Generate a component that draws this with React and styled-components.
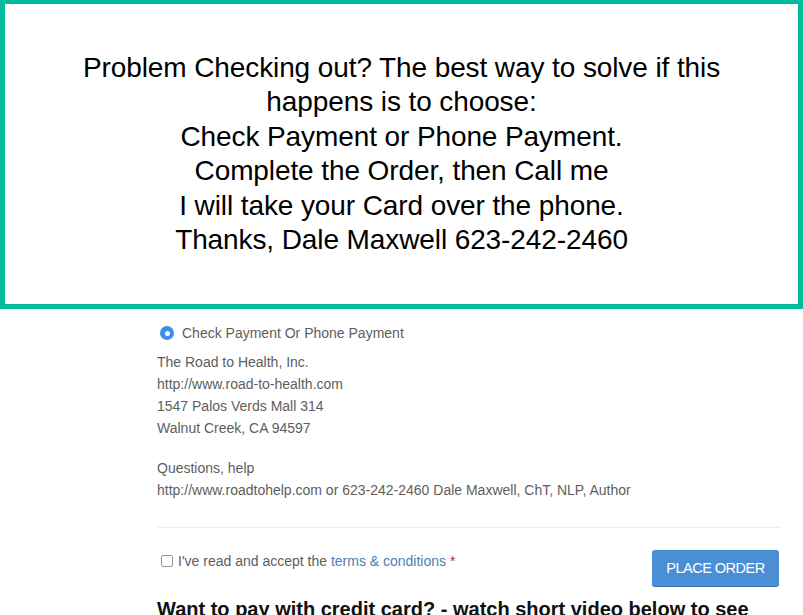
import React from 'react'
import styled, { createGlobalStyle } from 'styled-components'

const GlobalStyle = createGlobalStyle`
  body {
    margin: 0;
    background: #fff;
    font-family: "Liberation Sans", Arial, sans-serif;
  }
`

const Notice = styled.div`
  box-sizing: border-box;
  height: 309px;
  border: 5px solid #00bc9d;
  border-top-width: 4px;
  display: flex;
  align-items: center;
  justify-content: center;
`
const NoticeText = styled.p`
  margin: 0;
  text-align: center;
  font-size: 28px;
  line-height: 34.5px;
  color: #000;
  white-space: nowrap;
  letter-spacing: -0.1px;
`
const Content = styled.div`
  margin-left: 157px;
  width: 624px;
  padding-top: 13px;
  color: #5e5e5e;
  font-size: 14px;
`
const RadioRow = styled.label`
  display: flex;
  align-items: center;
  gap: 8px;
  height: 22px;
  margin-left: 3px;
  margin-bottom: 7px;
`
const Radio = styled.span`
  width: 14px;
  height: 14px;
  border-radius: 50%;
  background: #3d8ee8;
  display: flex;
  align-items: center;
  justify-content: center;
  &::after {
    content: '';
    width: 5px;
    height: 5px;
    border-radius: 50%;
    background: #fff;
  }
`
const Para = styled.p`
  margin: 0 0 18px;
  line-height: 22px;
`
const Rule = styled.hr`
  border: 0;
  border-top: 1px solid #eee;
  margin: 26px 0 22px;
`
const TermsRow = styled.div`
  display: flex;
  justify-content: space-between;
  align-items: flex-start;
`
const Terms = styled.label`
  display: flex;
  align-items: center;
  gap: 5px;
  line-height: 22px;
  margin-left: 4px;
`
const Box = styled.span`
  width: 10px;
  height: 10px;
  border: 1px solid #999;
  border-radius: 2px;
  background: #fff;
`
const Link = styled.a`
  color: #4a80b5;
  text-decoration: none;
`
const Required = styled.span`
  color: #a33;
`
const Button = styled.button`
  width: 127px;
  height: 36px;
  margin-right: 2px;
  border: 0;
  border-radius: 3px;
  background: #4a8fd5;
  box-shadow: 0 1px 0 #3a6fa5;
  color: #fff;
  font-family: "Liberation Sans", Arial, sans-serif;
  font-size: 14.5px;
  letter-spacing: -0.5px;
`
const Heading = styled.h3`
  margin: 11px 0 0;
  font-size: 20px;
  line-height: 24px;
  color: #111;
  font-weight: bold;
  white-space: nowrap;
`

const App = () => {
  const notice = [
    'Problem Checking out? The best way to solve if this',
    'happens is to choose:',
    'Check Payment or Phone Payment.',
    'Complete the Order, then Call me',
    'I will take your Card over the phone.',
    'Thanks, Dale Maxwell 623-242-2460',
  ]
  const address = [
    'The Road to Health, Inc.',
    'http://www.road-to-health.com',
    '1547 Palos Verds Mall 314',
    'Walnut Creek, CA 94597',
  ]

  return (
    <>
      <GlobalStyle />
      <Notice>
        <NoticeText>
          {notice.map((line, i) => (
            <React.Fragment key={line}>
              {line}
              {i < notice.length - 1 && <br />}
            </React.Fragment>
          ))}
        </NoticeText>
      </Notice>
      <Content>
        <RadioRow>
          <Radio />
          Check Payment Or Phone Payment
        </RadioRow>
        <Para>
          {address.map(line => (
            <React.Fragment key={line}>
              {line}
              <br />
            </React.Fragment>
          ))}
        </Para>
        <Para>
          Questions, help
          <br />
          http://www.roadtohelp.com or 623-242-2460 Dale Maxwell, ChT, NLP, Author
        </Para>
        <Rule />
        <TermsRow>
          <Terms>
            <Box />
            <span>
              I've read and accept the <Link href="#">terms &amp; conditions</Link> <Required>*</Required>
            </span>
          </Terms>
          <Button>PLACE ORDER</Button>
        </TermsRow>
        <Heading>Want to pay with credit card? - watch short video below to see</Heading>
      </Content>
    </>
  )
}

export default App
